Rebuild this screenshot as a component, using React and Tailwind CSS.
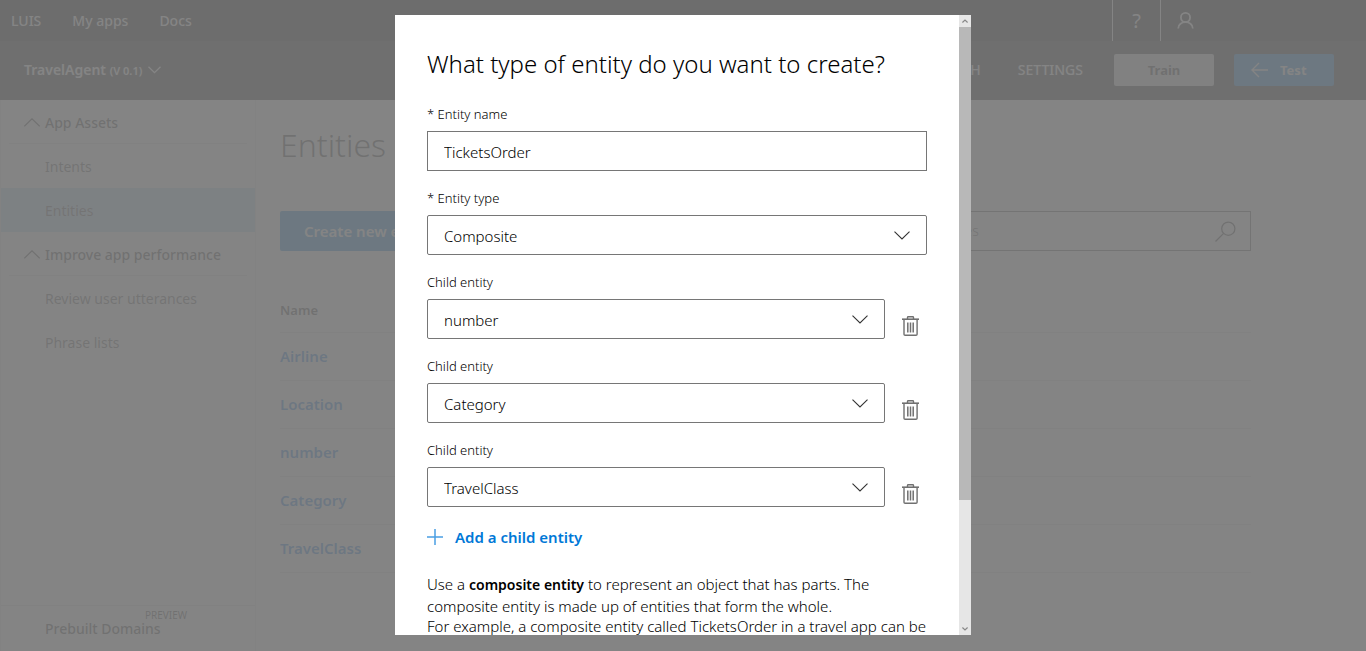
import React from "react";

const ChevronDown = ({ className }) => (
  <svg className={className} width="16" height="9" viewBox="0 0 16 9" fill="none" stroke="currentColor" strokeWidth="1.1" aria-hidden="true">
    <path d="M0.5 0.7 L8 8 L15.5 0.7" />
  </svg>
);

const ChevronUp = () => (
  <svg width="16" height="9" viewBox="0 0 16 9" fill="none" stroke="currentColor" strokeWidth="1.2" aria-hidden="true">
    <path d="M0.3 8.3 L8 0.8 L15.7 8.3" />
  </svg>
);

const TrashIcon = () => (
  <svg width="17" height="20" viewBox="0 0 17 20" fill="none" stroke="currentColor" aria-hidden="true">
    <path d="M0 3.2 H17" strokeWidth="1.6" />
    <path d="M5.5 3 V1.4 Q5.5 0.7 6.3 0.7 H10.7 Q11.5 0.7 11.5 1.4 V3" strokeWidth="1.4" />
    <path d="M2 3.5 V18.2 Q2 19.3 3.1 19.3 H14 Q15.1 19.3 15.1 18.2 V3.5" strokeWidth="1.4" />
    <path d="M5.8 6.5 V16.5 M8.5 6.5 V16.5 M11.2 6.5 V16.5" strokeWidth="1.5" />
  </svg>
);

const fieldClass =
  "h-10 w-full appearance-none border border-[#767676] bg-white px-4 pt-0.5 text-[15px] font-light text-black";

const labelClass = "mb-[7px] block text-[13px] leading-5 font-light text-black";

function SelectField({ id, label, value, children }) {
  return (
    <div className="mb-[17px]">
      <label htmlFor={id} className={labelClass}>{label}</label>
      <div className="flex">
        <div className="relative min-w-0 flex-1">
          <select id={id} defaultValue={value} className={fieldClass + " rounded-xs"}>
            <option>{value}</option>
          </select>
          <ChevronDown className="pointer-events-none absolute top-4 right-[17px] text-[#333]" />
        </div>
        {children}
      </div>
    </div>
  );
}

function Sidebar() {
  const group = "mx-2 flex h-11 items-center gap-[5px] border-b border-[#ddd] pt-0.5 pl-[15px] text-sm font-medium text-[#333]";
  const item = "flex h-11 items-center pt-0.5 pl-11 text-sm text-[#555]";
  return (
    <aside className="flex w-64 shrink-0 flex-col border-x border-[#e4e4e4]">
      <button type="button" className={group}><ChevronUp />App Assets</button>
      <a href="#intents" className={item}>Intents</a>
      <a href="#entities" className={item + " bg-[#b5daf5]"}>Entities</a>
      <button type="button" className={group}><ChevronUp />Improve app performance</button>
      <a href="#review" className={item}>Review user utterances</a>
      <a href="#phrases" className={item}>Phrase lists</a>
      <a href="#prebuilt" className="mt-auto flex h-[46px] flex-col border-t border-[#ddd] pl-11 text-sm leading-4 font-medium text-[#333]">
        <span className="ml-[100px] pt-[3px] text-[10px] leading-3 font-normal">PREVIEW</span>
        Prebuilt Domains
      </a>
    </aside>
  );
}

function AppPage() {
  return (
    <div className="flex h-full flex-col bg-white">
      <header className="text-sm text-white">
        <div className="flex h-[41px] items-stretch justify-between bg-black">
          <nav className="flex items-center gap-[31px] pl-[11px] font-medium">
            <a href="#luis">LUIS</a>
            <a href="#apps">My apps</a>
            <a href="#docs">Docs</a>
          </nav>
          <div className="flex">
            <button type="button" aria-label="Help" className="w-12 border-l border-white text-xl">?</button>
            <button type="button" aria-label="Account" className="w-[206px] border-l border-white pl-4">
              <svg width="17" height="17" viewBox="0 0 17 17" fill="none" stroke="currentColor" strokeWidth="1.8" aria-hidden="true">
                <circle cx="8.5" cy="5.5" r="4.6" />
                <path d="M1.2 16.5 C1.2 8 15.8 8 15.8 16.5" />
              </svg>
            </button>
          </div>
        </div>
        <div className="flex h-[59px] items-center justify-between bg-[#1d1d1d] pr-8 pb-px pl-6">
          <button type="button" className="flex items-center gap-1.5 font-semibold">
            <span>TravelAgent <small className="text-[11px] font-semibold">(V 0.1)</small></span>
            <svg width="13" height="8" viewBox="0 0 13 8" fill="none" stroke="currentColor" strokeWidth="1.3" aria-hidden="true">
              <path d="M0.5 0.7 L6.5 6.7 L12.5 0.7" />
            </svg>
          </button>
          <div className="flex items-center">
            <nav className="mr-[31px] flex gap-[37px] font-medium">
              <a href="#publish">PUBLISH</a>
              <a href="#settings">SETTINGS</a>
            </nav>
            <button type="button" className="mr-5 h-8 w-[100px] rounded-xs bg-[#dcdcdc] text-[13px] font-bold text-[#222]">Train</button>
            <button type="button" className="flex h-8 w-[100px] items-center gap-3 rounded-xs bg-[#0078d7] pl-[17px] text-[13px] font-bold">
              <svg width="17" height="16" viewBox="0 0 17 16" fill="none" stroke="currentColor" strokeWidth="1.4" aria-hidden="true">
                <path d="M17 8 H1 M8 1 L1 8 L8 15" />
              </svg>
              Test
            </button>
          </div>
        </div>
      </header>
      <div className="flex min-h-0 flex-1">
        <Sidebar />
        <main className="min-w-0 flex-1 pt-5 pr-[115px] pl-6">
          <h1 className="text-[32px] leading-[50px] font-light text-[#333]">Entities</h1>
          <div className="mt-[41px] flex h-10 items-stretch justify-between">
            <button type="button" className="rounded-xs bg-[#0078d7] px-6 text-[15px] font-semibold text-white">Create new entity</button>
            <div className="flex w-[404px] items-center border border-[#555] pr-3.5 pl-4">
              <input type="search" aria-label="Search entities" placeholder="Search for entities" className="min-w-0 flex-1 bg-transparent text-sm font-light placeholder:text-[#555]" />
              <svg width="21" height="21" viewBox="0 0 21 21" fill="none" stroke="#333" strokeWidth="1.3" aria-hidden="true">
                <circle cx="13.3" cy="7.7" r="6.6" />
                <path d="M8.6 12.4 L0.5 20.5" />
              </svg>
            </div>
          </div>
          <table className="mt-[39px] w-full text-left">
            <thead>
              <tr className="h-[42px] border-b border-[#ddd]">
                <th className="text-[13px] font-semibold text-[#333]">Name</th>
              </tr>
            </thead>
            <tbody>
              {["Airline", "Location", "number", "Category", "TravelClass"].map((name) => (
                <tr key={name} className="h-12 border-b border-[#ddd] text-[15px] font-semibold text-[#0070e0]">
                  <td><a href={"#" + name}>{name}</a></td>
                </tr>
              ))}
            </tbody>
          </table>
        </main>
      </div>
    </div>
  );
}

function ScrollRail() {
  const arrow = "flex h-3 items-center justify-center text-[#888]";
  return (
    <div className="flex w-3 shrink-0 flex-col bg-[#e6e6e6]" aria-hidden="true">
      <div className={arrow}>
        <svg width="6" height="4" viewBox="0 0 6 4" fill="none" stroke="currentColor" strokeWidth="1.2"><path d="M0.4 3.5 L3 1 L5.6 3.5" /></svg>
      </div>
      <div className="flex flex-1 flex-col">
        <div className="grow-27 basis-0 bg-[#b8b8b8]" />
        <div className="grow-7 basis-0" />
      </div>
      <div className={arrow}>
        <svg width="6" height="4" viewBox="0 0 6 4" fill="none" stroke="currentColor" strokeWidth="1.2"><path d="M0.4 0.5 L3 3 L5.6 0.5" /></svg>
      </div>
    </div>
  );
}

function EntityDialog() {
  return (
    <div role="dialog" aria-modal="true" aria-labelledby="dialog-title" className="flex h-full w-full max-w-[576px] bg-white">
      <div className="min-w-0 flex-1 overflow-hidden px-8 pt-[33px] text-black">
        <h2 id="dialog-title" className="mb-6 text-2xl leading-8 font-light">What type of entity do you want to create?</h2>
        <div className="mb-[17px]">
          <label htmlFor="entity-name" className={labelClass}>* Entity name</label>
          <input id="entity-name" type="text" defaultValue="TicketsOrder" className={fieldClass} />
        </div>
        <SelectField id="entity-type" label="* Entity type" value="Composite" />
        {["number", "Category", "TravelClass"].map((name) => (
          <SelectField key={name} id={"child-" + name} label="Child entity" value={name}>
            <button type="button" aria-label={"Delete " + name} className="flex w-[42px] items-end justify-end pr-2 pb-[3px] text-[#707070]">
              <TrashIcon />
            </button>
          </SelectField>
        ))}
        <button type="button" className="flex items-center gap-3 pt-px text-[15px] leading-6 font-semibold text-[#0078d7]">
          <svg width="16" height="16" viewBox="0 0 16 16" fill="none" stroke="#4a9fe3" strokeWidth="1.5" aria-hidden="true">
            <path d="M8 0 V16 M0 8 H16" />
          </svg>
          Add a child entity
        </button>
        <p className="mt-6 text-[15px] leading-[22px] font-light">
          Use a <strong className="text-sm font-semibold">composite entity</strong> to represent an object that has parts. The composite entity is made up of entities that form the whole.
        </p>
        <p className="text-[15px] leading-[18px] font-light">For example, a composite entity called TicketsOrder in a travel app can be</p>
      </div>
      <ScrollRail />
    </div>
  );
}

export default function App() {
  return (
    <div className="h-screen overflow-hidden font-['Noto_Sans',sans-serif]">
      <AppPage />
      <div className="fixed inset-0 flex justify-center bg-[#787878]/91 pt-[15px] pb-4">
        <EntityDialog />
      </div>
    </div>
  );
}
